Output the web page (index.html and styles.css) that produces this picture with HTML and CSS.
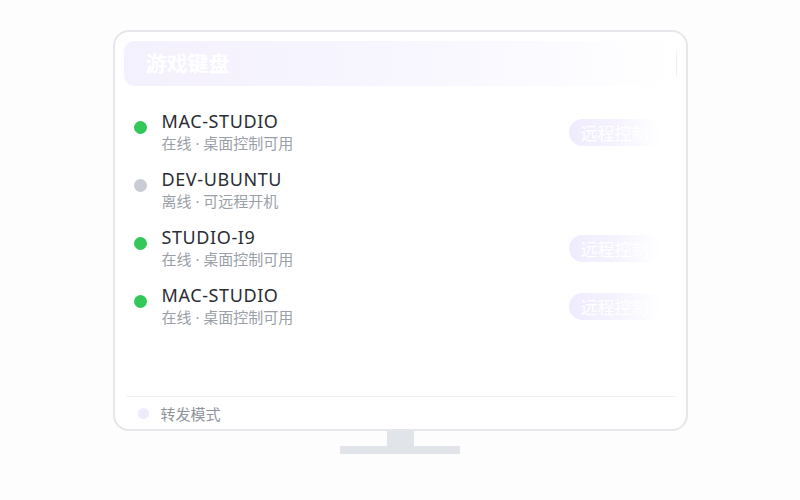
FILE: index.html
```html
<!DOCTYPE html>
<html lang="zh-CN">
<head>
  <meta charset="UTF-8">
  <meta name="viewport" content="width=device-width, initial-scale=1.0">
  <title>游戏键盘</title>
  <link rel="stylesheet" href="styles.css">
</head>
<body>
  <div class="stage">
    <div class="monitor">
      <div class="monitor__header">
        <span class="monitor__title">游戏键盘</span>
        <span class="monitor__tick"></span>
      </div>
      <div class="device-list">
        <div class="device">
          <span class="device__dot is-online"></span>
          <div class="device__info">
            <div class="device__name">MAC-STUDIO</div>
            <div class="device__meta">在线 · 桌面控制可用</div>
          </div>
          <button class="device__action">远程控制</button>
        </div>
        <div class="device">
          <span class="device__dot"></span>
          <div class="device__info">
            <div class="device__name">DEV-UBUNTU</div>
            <div class="device__meta">离线 · 可远程开机</div>
          </div>
        </div>
        <div class="device">
          <span class="device__dot is-online"></span>
          <div class="device__info">
            <div class="device__name">STUDIO-I9</div>
            <div class="device__meta">在线 · 桌面控制可用</div>
          </div>
          <button class="device__action">远程控制</button>
        </div>
        <div class="device">
          <span class="device__dot is-online"></span>
          <div class="device__info">
            <div class="device__name">MAC-STUDIO</div>
            <div class="device__meta">在线 · 桌面控制可用</div>
          </div>
          <button class="device__action">远程控制</button>
        </div>
      </div>
      <div class="monitor__footer">
        <span class="footer__dot"></span>
        <span class="footer__label">转发模式</span>
      </div>
    </div>
    <div class="stand__neck"></div>
    <div class="stand__base"></div>
  </div>
</body>
</html>
```

FILE: styles.css
```css
* {
  box-sizing: border-box;
}

html,
body {
  margin: 0;
  height: 100%;
  overflow: hidden;
}

body {
  background: #fdfdfd;
  font-family: "Noto Sans", "Noto Sans CJK SC", sans-serif;
}

.stage {
  display: flex;
  flex-direction: column;
  align-items: center;
  padding-top: 30px;
}

.monitor {
  display: flex;
  flex-direction: column;
  width: 575px;
  height: 401px;
  padding: 9px 9px 0;
  background: #fff;
  border: 2px solid #e5e7eb;
  border-radius: 16px;
}

.monitor__header {
  display: flex;
  align-items: center;
  justify-content: space-between;
  height: 45px;
  padding: 0 0 0 22px;
  border-radius: 10px;
  background: linear-gradient(90deg, #f4f1fe 0%, #f7f5fe 45%, #fcfbff 80%, #fff 100%);
}

.monitor__title {
  color: #fff;
  font-size: 21px;
  font-weight: 700;
  line-height: 1;
}

.monitor__tick {
  width: 1px;
  height: 26px;
  background: #f1f1f4;
}

.device-list {
  flex: 1;
  display: flex;
  flex-direction: column;
  gap: 14px;
  padding: 24px 0 0 10px;
}

.device {
  display: flex;
  align-items: center;
}

.device__dot {
  align-self: flex-start;
  width: 13px;
  height: 13px;
  margin-top: 11px;
  margin-right: 15px;
  border-radius: 50%;
  background: #c9ccd4;
}

.device__dot.is-online {
  background: #34c759;
}

.device__info {
  flex: 1;
}

.device__name {
  color: #2a2d33;
  font-size: 18px;
  line-height: 22px;
  letter-spacing: .6px;
}

.device__meta {
  color: #9a9fa8;
  font-size: 15px;
  line-height: 22px;
}

.device__action {
  appearance: none;
  -webkit-appearance: none;
  width: 92px;
  height: 27px;
  margin-right: 16px;
  padding: 0 0 0 12px;
  border: none;
  border-radius: 14px;
  background: linear-gradient(90deg, #efebfe 0%, #f5f2fe 50%, rgba(255, 255, 255, 0) 100%);
  color: #fff;
  font-family: "Liberation Serif", "Noto Sans CJK SC", serif;
  font-size: 17px;
  text-align: left;
  white-space: nowrap;
  overflow: hidden;
}

.monitor__footer {
  display: flex;
  align-items: center;
  height: 33px;
  margin: 0 2px;
  padding-left: 12px;
  border-top: 1px solid #eef0f3;
}

.footer__dot {
  width: 11px;
  height: 11px;
  margin-right: 12px;
  border-radius: 50%;
  background: #efebfd;
}

.footer__label {
  color: #8f949c;
  font-size: 15px;
}

.stand__neck {
  width: 27px;
  height: 15px;
  background: #e1e4e8;
}

.stand__base {
  width: 120px;
  height: 8px;
  background: #e1e4e8;
}
```
